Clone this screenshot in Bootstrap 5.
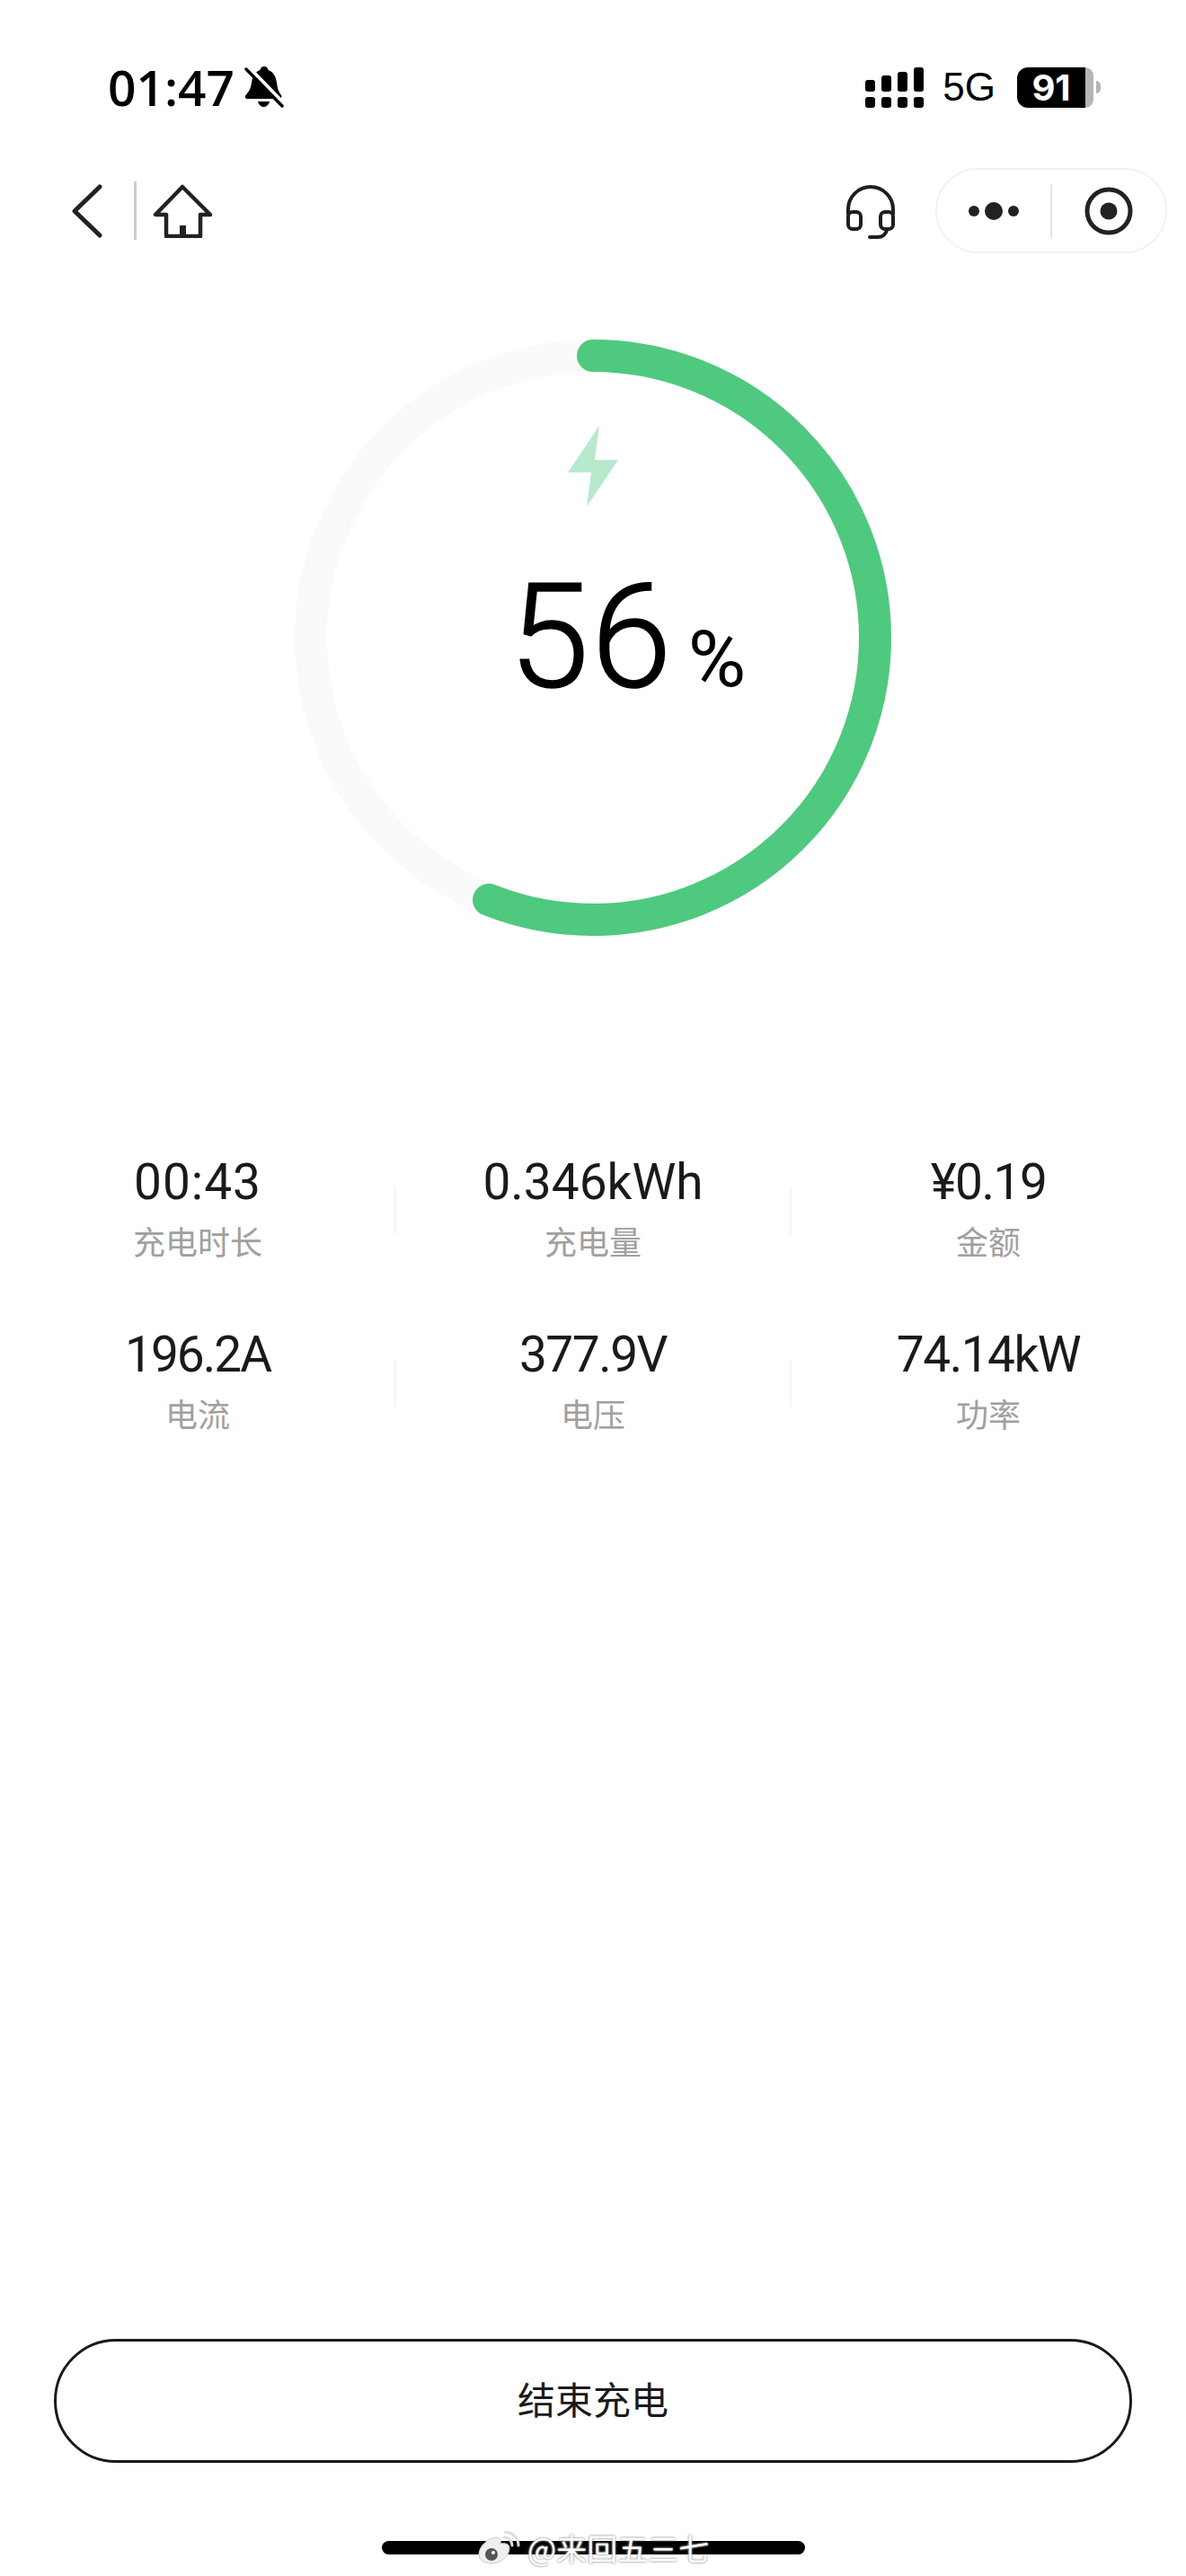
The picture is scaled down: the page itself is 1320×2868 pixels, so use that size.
<!DOCTYPE html>
<html lang="zh-CN">
<head>
  <meta charset="UTF-8">
  <meta name="viewport" content="width=device-width, initial-scale=1">
  <title>充电中</title>
  <link href="https://cdn.jsdelivr.net/npm/bootstrap@5.3.3/dist/css/bootstrap.min.css" rel="stylesheet">
  <style>
    body { background: #fff; color: #1a1a1a; font-family: Roboto, "Noto Sans CJK SC", sans-serif; }
    .screen { width: 1320px; height: 2868px; overflow: hidden; }

    .status-row { height: 187px; padding: 74px 95px 0 120px; align-items: flex-start; }
    .clock { font: 600 55px/46px "Open Sans", sans-serif; color: #000; }
    .bell-icon { margin-left: 3px; }
    .net-type { font: 400 44px/46px "Liberation Sans", sans-serif; color: #000; margin: 0 24px 0 21px; }
    .batt-fill { width: 76px; height: 45px; background: #000; color: #fff; font: 700 40px/45px Inter, sans-serif; border-radius: 12px 0 0 12px; }
    .batt-rest { width: 9px; height: 45px; background: #b5b5b5; border-radius: 0 10px 10px 0; }
    .batt-cap { width: 5px; height: 14px; margin-left: 3px; background: #b5b5b5; border-radius: 0 5px 5px 0; }

    .nav-row { height: 95px; padding: 0 21px 0 78px; }
    .nav-sep { width: 3px; height: 65px; background: #ccc; margin: 0 18px 0 33px; }
    .capsule { width: 258px; height: 95px; margin-left: 43px; border: 2px solid #f2f2f2; border-radius: 48px; }
    .capsule-half { flex: 1 1 0; height: 100%; }
    .capsule-sep { width: 2px; height: 60px; background: #e6e6e6; }

    .gauge { width: 700px; height: 700px; margin: 78px auto 0; }
    .gauge-bolt { top: 114px; left: 322px; }
    .gauge-num { top: 254px; left: 0; width: 100%; padding-left: 76px; color: #000; }
    .gauge-val { font: 300 162px/190px Roboto, sans-serif; letter-spacing: 2px; -webkit-text-stroke: 1.5px #000; }
    .gauge-pct { font: 400 88px/1 Roboto, sans-serif; margin-left: 16px; }

    .stats { margin-top: 222px; }
    .stat-cell { height: 192px; }
    .stat-val { font: 400 55px/68px Roboto, sans-serif; color: #1a1a1a; }
    .stat-tight { letter-spacing: -1.5px; }
    .stat-tighter { letter-spacing: -2px; }
    .stat-loose { letter-spacing: 1px; }
    .stat-label { font: 400 36px/50px "Noto Sans CJK SC", sans-serif; color: #a0a0a0; margin-top: 6px; }
    .stat-sep { top: 40px; right: -1px; width: 2px; height: 52px; background: #f4f4f4; }

    .end-btn { width: 1200px; height: 138px; padding: 0 0 6px; border: 3px solid #1a1a1a; border-radius: 69px; background: #fff; color: #1a1a1a; font: 400 42px/1 "Noto Sans CJK SC", sans-serif; }
    .end-btn:hover { background: #fff; color: #1a1a1a; border-color: #1a1a1a; }

    .home-zone { height: 126px; }
    .home-bar { top: 87px; left: 425px; width: 471px; height: 15px; background: #000; border-radius: 8px; }
    .watermark { top: 76px; left: 531px; color: #fff; font: 400 34px/36px "Noto Sans CJK SC", sans-serif; text-shadow: 0 0 3px #999, 0 0 2px #aaa; }
  </style>
</head>
<body>

<div class="screen d-flex flex-column">

  <div class="status-row d-flex justify-content-between">
    <div class="d-flex align-items-center gap-2">
      <span class="clock">01:47</span>
      <svg class="bell-icon" width="44" height="46" viewBox="0 0 44 46">
        <path d="M22 0C25 0 26 2 26.5 4C33 6 35 12 36 18C37 25 38 28 41 32C42 34 41 36 39 36H4C1 36 0 34 1.5 32C5 28 7 25 8 18C9 12 11 6 17.5 4C18 2 19 0 22 0Z" fill="#000"/>
        <path d="M15 39H28C27 43 24 45 21.5 45C19 45 16 43 15 39Z" fill="#000"/>
        <line x1="5" y1="1" x2="44" y2="41" stroke="#fff" stroke-width="4"/>
        <line x1="2" y1="3" x2="42" y2="44" stroke="#000" stroke-width="3.5" stroke-linecap="round"/>
      </svg>
    </div>
    <div class="d-flex align-items-center">
      <svg width="65" height="45" viewBox="0 0 65 45" fill="#000">
        <rect x="0" y="33" width="11" height="12" rx="3"/><rect x="18" y="33" width="11" height="12" rx="3"/>
        <rect x="36" y="33" width="11" height="12" rx="3"/><rect x="54" y="33" width="11" height="12" rx="3"/>
        <rect x="0" y="14" width="11" height="13" rx="3"/><rect x="18" y="9" width="11" height="18" rx="3"/>
        <rect x="36" y="5" width="11" height="22" rx="3"/><rect x="54" y="0" width="11" height="27" rx="3"/>
      </svg>
      <span class="net-type">5G</span>
      <div class="batt-fill text-center">91</div>
      <div class="batt-rest"></div>
      <div class="batt-cap"></div>
    </div>
  </div>

  <div class="nav-row d-flex justify-content-between align-items-center">
    <div class="d-flex align-items-center">
      <svg width="38" height="62" viewBox="0 0 38 62"><path d="M33 4L5 31L33 58" fill="none" stroke="#222" stroke-width="5" stroke-linecap="round" stroke-linejoin="round"/></svg>
      <div class="nav-sep"></div>
      <svg width="66" height="60" viewBox="0 0 66 60"><path d="M33 3L3 34H15V58H53V34H64Z" fill="none" stroke="#222" stroke-width="4.5" stroke-linejoin="round"/><rect x="30" y="46" width="7" height="12" fill="#222"/></svg>
    </div>
    <div class="d-flex align-items-center">
      <svg width="58" height="62" viewBox="0 0 58 62" fill="none" stroke="#1f1f1f" stroke-width="4" stroke-linecap="round">
        <path d="M4 34V29A25 25 0 0 1 54 29V34"/>
        <rect x="4" y="32" width="14" height="19" rx="5"/>
        <rect x="40" y="32" width="14" height="19" rx="5"/>
        <path d="M47 52C46 57 42 60 37 60H28"/>
      </svg>
      <div class="capsule d-flex align-items-center">
        <div class="capsule-half d-flex align-items-center justify-content-center">
          <svg width="66" height="24" viewBox="0 0 66 24" fill="#222"><circle cx="11" cy="12" r="6"/><circle cx="33" cy="12" r="10"/><circle cx="55" cy="12" r="6"/></svg>
        </div>
        <div class="capsule-sep"></div>
        <div class="capsule-half d-flex align-items-center justify-content-center">
          <svg width="56" height="56" viewBox="0 0 56 56"><circle cx="28" cy="28" r="24" fill="none" stroke="#222" stroke-width="5"/><circle cx="28" cy="28" r="9.5" fill="#222"/></svg>
        </div>
      </div>
    </div>
  </div>

  <div class="gauge position-relative">
    <svg width="700" height="700" viewBox="0 0 700 700" class="d-block">
      <circle cx="350" cy="350" r="314" fill="none" stroke="#fafafa" stroke-width="36"/>
      <circle cx="350" cy="350" r="314" fill="none" stroke="#4fc97f" stroke-width="36" stroke-linecap="round" stroke-dasharray="1104.8 1972.9" transform="rotate(-90 350 350)"/>
    </svg>
    <svg class="gauge-bolt position-absolute" width="60" height="92" viewBox="0 0 60 92"><path d="M35 0L30 38H56L21 90L26 52H0Z" fill="#b7e9cd"/></svg>
    <div class="gauge-num position-absolute d-flex justify-content-center align-items-baseline">
      <span class="gauge-val">56</span><span class="gauge-pct">%</span>
    </div>
  </div>

  <div class="stats row g-0">
    <div class="col-4 stat-cell position-relative text-center">
      <div class="stat-val stat-loose">00:43</div><div class="stat-label">充电时长</div>
      <div class="stat-sep position-absolute"></div>
    </div>
    <div class="col-4 stat-cell position-relative text-center">
      <div class="stat-val">0.346kWh</div><div class="stat-label">充电量</div>
      <div class="stat-sep position-absolute"></div>
    </div>
    <div class="col-4 stat-cell text-center">
      <div class="stat-val stat-tight">¥0.19</div><div class="stat-label">金额</div>
    </div>
    <div class="col-4 stat-cell position-relative text-center">
      <div class="stat-val stat-tighter">196.2A</div><div class="stat-label">电流</div>
      <div class="stat-sep position-absolute"></div>
    </div>
    <div class="col-4 stat-cell position-relative text-center">
      <div class="stat-val stat-tight">377.9V</div><div class="stat-label">电压</div>
      <div class="stat-sep position-absolute"></div>
    </div>
    <div class="col-4 stat-cell text-center">
      <div class="stat-val stat-tight">74.14kW</div><div class="stat-label">功率</div>
    </div>
  </div>

  <div class="mt-auto d-flex justify-content-center">
    <button type="button" class="btn end-btn">结束充电</button>
  </div>

  <div class="home-zone position-relative">
    <div class="home-bar position-absolute"></div>
    <div class="watermark position-absolute d-flex align-items-center gap-2">
      <svg width="48" height="38" viewBox="0 0 48 38">
        <path d="M2 26C2 16 14 7 21 7C26 7 27 11 26 14C31 13 36 14 36 19C36 28 26 36 16 36C8 36 2 32 2 26Z" fill="#efefef" stroke="#ccc"/>
        <circle cx="16" cy="26" r="7" fill="#555"/><circle cx="18" cy="24" r="2" fill="#fff"/>
        <path d="M30 7A9 9 0 0 1 39 16M31 1A15 15 0 0 1 46 16" fill="none" stroke="#ddd" stroke-width="3" stroke-linecap="round"/>
      </svg>
      <span>@来回五三七</span>
    </div>
  </div>

</div>

<script src="https://cdn.jsdelivr.net/npm/bootstrap@5.3.3/dist/js/bootstrap.bundle.min.js"></script>
</body>
</html>
